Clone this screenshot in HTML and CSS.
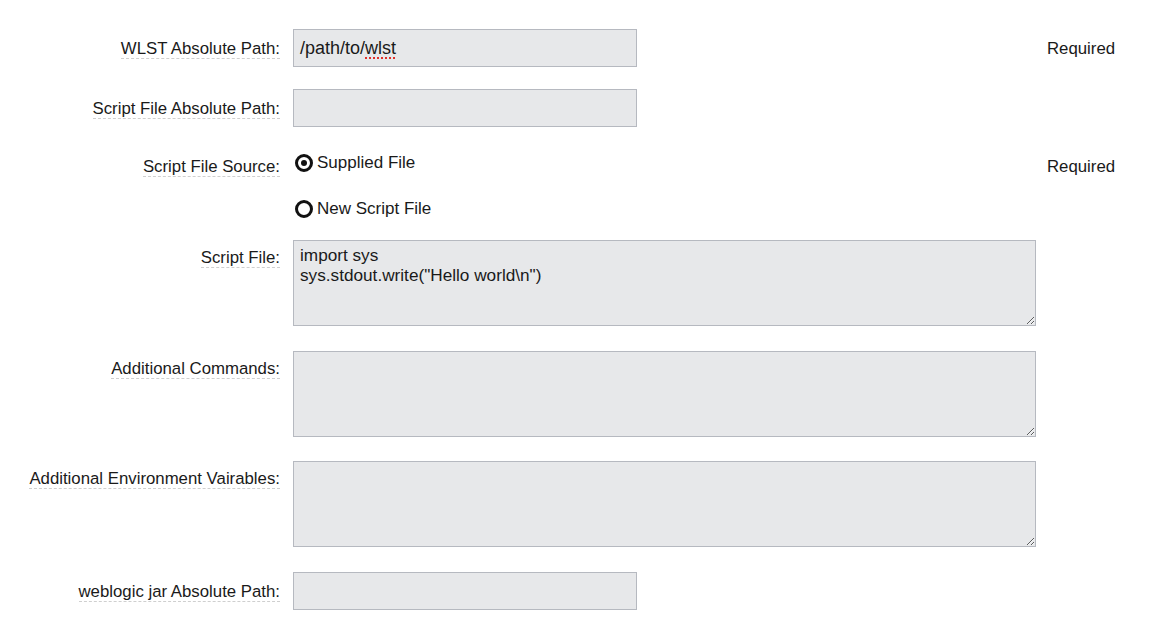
FILE: index.html
```html
<!DOCTYPE html>
<html lang="en">
<head>
<meta charset="utf-8">
<title>WLST Settings</title>
<link rel="stylesheet" href="styles.css">
</head>
<body>
<form class="form">
  <div class="row row-input">
    <div class="label"><span class="label-text">WLST Absolute Path:</span></div>
    <div class="field"><div class="input">/path/to/<span class="misspelled">wlst</span></div></div>
    <div class="note">Required</div>
  </div>
  <div class="row row-input">
    <div class="label"><span class="label-text">Script File Absolute Path:</span></div>
    <div class="field"><div class="input"></div></div>
  </div>
  <div class="row row-radio">
    <div class="label"><span class="label-text">Script File Source:</span></div>
    <div class="field radios">
      <label class="radio"><span class="radio-mark checked"></span>Supplied File</label>
      <label class="radio"><span class="radio-mark"></span>New Script File</label>
    </div>
    <div class="note">Required</div>
  </div>
  <div class="row row-area row-first-area">
    <div class="label"><span class="label-text">Script File:</span></div>
    <div class="field"><textarea class="textarea">import sys
sys.stdout.write("Hello world\n")</textarea></div>
  </div>
  <div class="row row-area">
    <div class="label"><span class="label-text">Additional Commands:</span></div>
    <div class="field"><textarea class="textarea"></textarea></div>
  </div>
  <div class="row row-area row-env">
    <div class="label"><span class="label-text">Additional Environment Vairables:</span></div>
    <div class="field"><textarea class="textarea"></textarea></div>
  </div>
  <div class="row row-input row-last">
    <div class="label"><span class="label-text">weblogic jar Absolute Path:</span></div>
    <div class="field"><div class="input"></div></div>
  </div>
</form>
</body>
</html>
```

FILE: styles.css
```css
html, body {
  background: #ffffff;
}
body {
  margin: 8px;
  font-family: "Liberation Sans", Arial, Helvetica, sans-serif;
  font-size: 16.8px;
  color: #1a1a1a;
}
.form {
  padding-top: 21px;
}
.row {
  display: grid;
  grid-template-columns: 272px 743px auto;
  column-gap: 13px;
  align-items: start;
  margin-top: 22px;
}
.row:first-child {
  margin-top: 0;
}
.label {
  text-align: right;
  padding-top: 10px;
  line-height: 19px;
}
.label-text {
  border-bottom: 1px dashed #cfcfcf;
}
.note {
  margin-left: -2px;
  padding-top: 10px;
  line-height: 19px;
}
.input {
  width: 344px;
  height: 38px;
  box-sizing: border-box;
  background: #e7e8ea;
  border: 1px solid #b6b9c0;
  padding: 0 6px;
  font-size: 18px;
  line-height: 36px;
  white-space: nowrap;
}
.misspelled {
  text-decoration: underline dotted #e0302a;
  text-decoration-thickness: 2px;
  text-underline-offset: 3px;
}
.row-radio .label,
.row-radio .note {
  padding-top: 8px;
}
.radios {
  display: flex;
  flex-direction: column;
  gap: 26px;
  padding-top: 4px;
}
.radio {
  display: flex;
  align-items: center;
  gap: 4px;
  font-size: 17px;
  line-height: 20px;
  height: 20px;
}
.radio-mark {
  width: 18px;
  height: 18px;
  box-sizing: border-box;
  margin-left: 2px;
  border: 3px solid #111;
  border-radius: 50%;
  background: #fff;
  display: flex;
  align-items: center;
  justify-content: center;
}
.radio-mark.checked::after {
  content: "";
  width: 6px;
  height: 6px;
  border-radius: 50%;
  background: #111;
}
.row-area {
  margin-top: 25px;
}
.row-area.row-first-area {
  margin-top: 21px;
}
.row-area.row-env {
  margin-top: 24px;
}
.row-input.row-last {
  margin-top: 25px;
}
.row-area .label {
  padding-top: 8px;
}
.textarea {
  display: block;
  width: 743px;
  height: 86px;
  box-sizing: border-box;
  margin: 0;
  background: #e7e8ea;
  border: 1px solid #b6b9c0;
  padding: 4px 6px;
  font-family: "Liberation Sans", Arial, Helvetica, sans-serif;
  font-size: 17.2px;
  line-height: 20px;
  color: #1a1a1a;
  resize: both;
  border-radius: 0;
}
```
